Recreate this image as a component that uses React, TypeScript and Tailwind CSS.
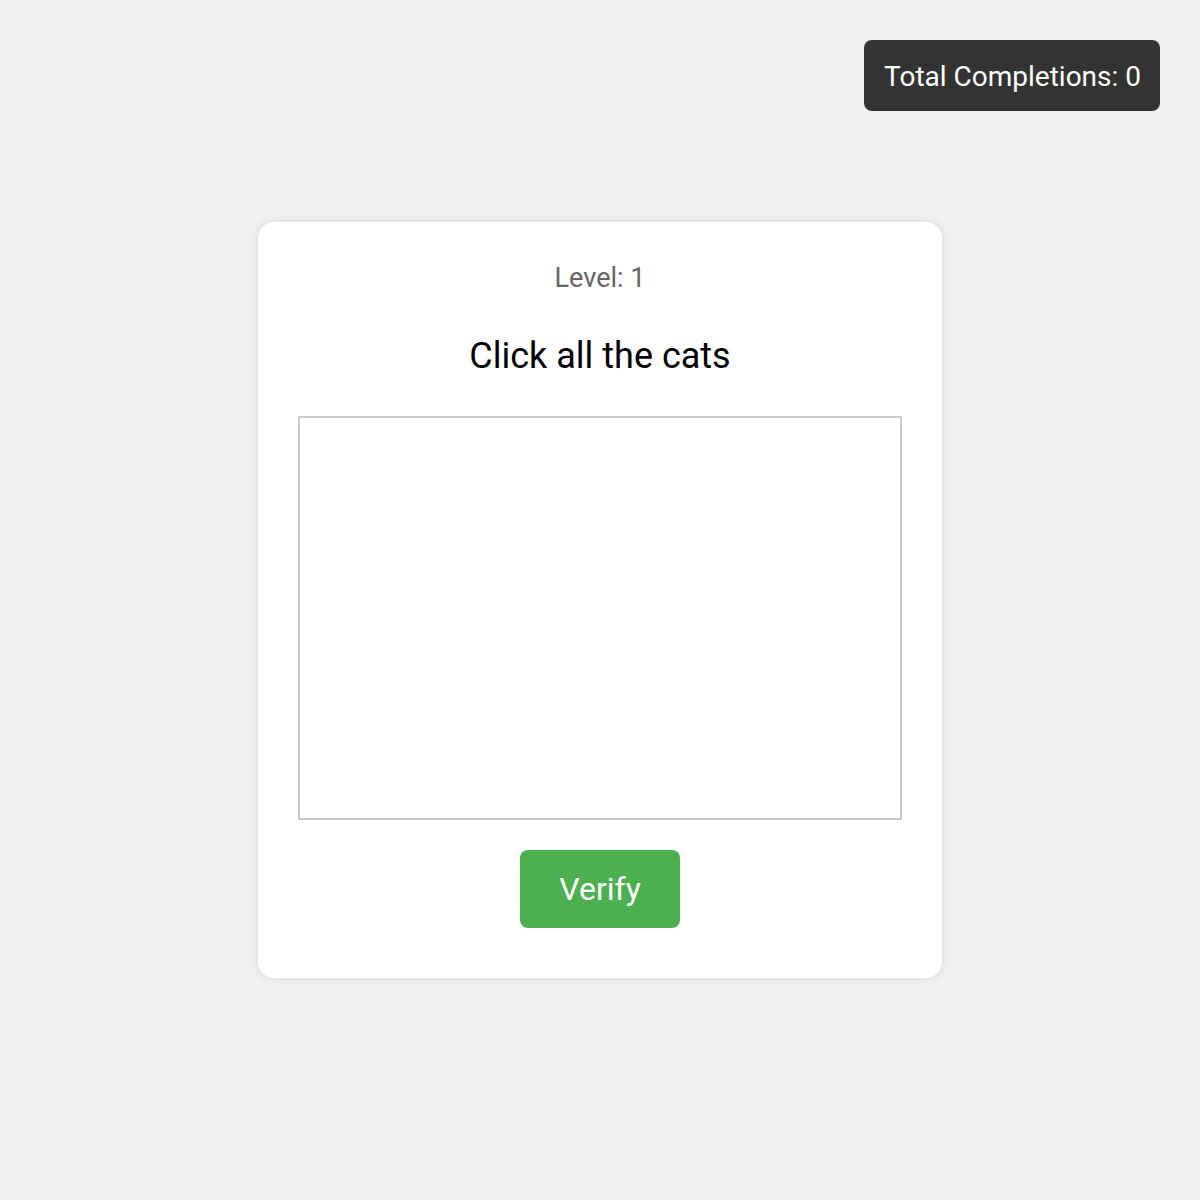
export default function App() {
    return (
        <div
            className="min-h-screen bg-[#f0f0f0] flex items-center justify-center"
            style={{ fontFamily: "Roboto, 'Noto Sans', sans-serif" }}
        >
            <div className="fixed top-[40px] right-[40px] bg-[#333333] text-white rounded-lg pl-[20px] pr-[19px] pt-[22px] pb-[19px] text-[28px] leading-[30px]">
                Total Completions: 0
            </div>

            <div className="bg-white rounded-2xl shadow-[0_0_10px_rgba(0,0,0,0.1)] pt-[40px] px-[40px] pb-[50px] flex flex-col items-center">
                <p className="text-[27px] leading-[32px] text-[#666666]">Level: 1</p>
                <h2 className="mt-[41px] text-[36px] leading-[42px] text-black">
                    Click all the cats
                </h2>
                <div className="mt-[39px] w-[604px] h-[404px] border-2 border-[#cccccc] bg-white" />
                <button className="mt-[30px] w-[160px] h-[78px] bg-[#4caf50] text-white text-[32px] leading-none rounded-lg">
                    Verify
                </button>
            </div>
        </div>
    );
}
